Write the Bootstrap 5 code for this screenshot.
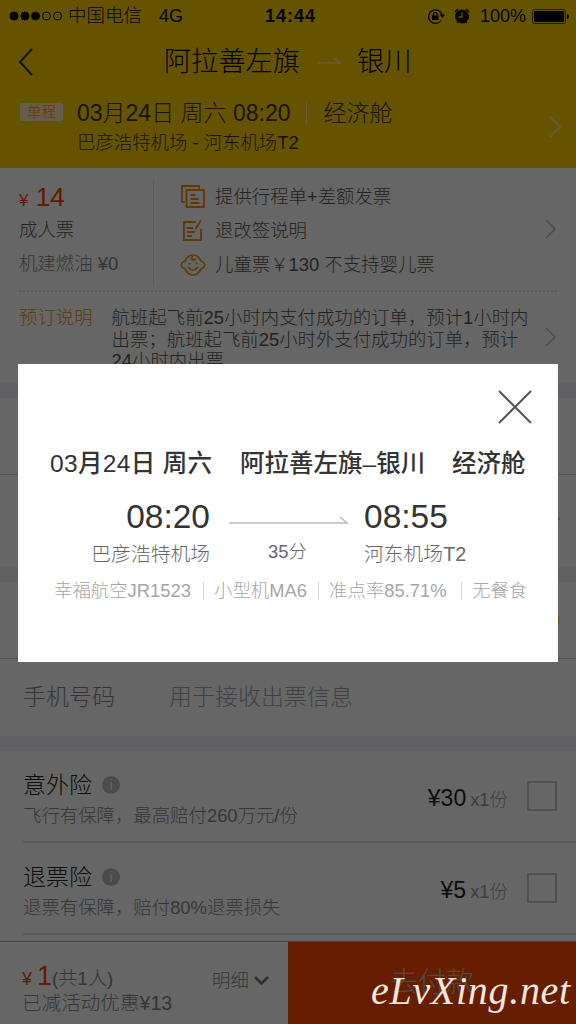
<!DOCTYPE html>
<html lang="zh-CN">
<head>
<meta charset="utf-8">
<meta name="viewport" content="width=device-width, initial-scale=1">
<title>航班订单</title>
<link href="https://cdn.jsdelivr.net/npm/bootstrap@5.3.0/dist/css/bootstrap.min.css" rel="stylesheet">
<style>
html,body{height:100%}
body{font-family:"Liberation Sans","Noto Sans CJK SC",sans-serif;font-size:18.4px;font-weight:300;line-height:1;color:#555;background:#fff;overflow:hidden;white-space:nowrap}
svg{display:block;flex:none;fill:none}
.phone{width:576px;height:1024px;position:relative;overflow:hidden}
.top-area{background:#ffcf00;height:168px;color:#111}
.status-row{height:32px;padding-left:9px;color:#080808;font-size:18px}
.carrier{font-size:18.5px;margin-left:5px}
.net-type{margin-left:17px}
.clock{margin-left:82px;font-weight:700;letter-spacing:1px;width:162px}
.pct{margin-left:10px;width:51px}
.nav-row{height:60px;padding-left:18px;font-size:27.2px;color:#000}
.nav-row .from{margin-left:130px;width:153px}
.nav-row .to{margin-left:16px}
.trip-row{padding:7px 14px 0 20px}
.trip-tag{width:43px;height:18px;border-radius:2px;background:#ffe9b8;color:#f80;font-size:14.5px;line-height:18px;text-align:center;margin:4px 14px 0 0}
.trip-date{font-size:23px;height:28px;line-height:28px;color:#3d3300}
.trip-date i{width:1px;height:23px;background:#ffec9c;margin:0 17px 0 15px}
.trip-port{height:30px;line-height:32px;color:#3d3300}
.fare{height:124px;margin:0 19px;border-bottom:2px dotted #e4e4e4;padding-top:11px}
.fare-left{width:135px;height:107px;border-right:1px solid #e6e6e6}
.fare-left>div,.fare-right>div{height:34px;line-height:34px}
.fare-left .price{color:#ff3a00;font-size:26px;margin-top:3px;height:31px;line-height:31px}
.price small,.total small{font-size:17px}
.pale{color:#888}
.fare-right{margin-left:26px;width:350px}
.fare-right svg{margin-right:9px}
.fare-right>div:first-child{height:35px}
.notice{height:91px;padding:15px 19px 0}
.orange{color:#f28a10}
.notice p{width:438px;margin:0 0 0 19px;line-height:21.7px}
.notice p,.notice .orange{line-height:21.7px}
.band{height:15px;background:#f0f0f5}
.blank-a{height:77px;border-bottom:1px solid #ccc}
.blank-b{height:92px}
.blank-c{height:77px;border-bottom:1px solid #ccc}
.phone-field{height:77px;padding-left:23px;font-size:23px;color:#858585}
.phone-field span+span{margin-left:54px;color:#a3a3ac}
.insure{height:92px;margin-left:23px;padding-right:19px;border-bottom:2px solid #dedede}
.insure h2{font-size:23px;line-height:32px;font-weight:300;color:#222;margin:18px 0 0}
.insure p{line-height:30px;margin:0;color:#888}
.info-dot{width:18px;height:18px;border-radius:50%;background:#bbb;color:#fff;font-size:14px;line-height:18px;text-align:center;margin-left:10px}
.cost{font-size:23px;color:#222;margin-top:4px}
.cost span{font-size:18.4px;color:#999;margin-left:4px}
.tick{width:30px;height:30px;border:2px solid #c5c5c5;margin-left:19px}
.pay-bar{position:absolute;left:0;right:0;bottom:0;height:83px;background:#fff;border-top:1px solid #aaa}
.sum{width:288px;padding:18px 0 0 22px;color:#858585}
.total{height:32px;line-height:32px;font-size:19px;width:190px}
.total b{font-weight:400;font-size:27px;color:#ff4200}
.total small{color:#ff4200;font-size:18px;margin-right:5px}
.saved{font-size:19.6px;line-height:22px}
.pay-btn{width:288px;background:#ff4a00;border:0;border-radius:0;color:#bbb;font-size:28px;font-weight:300;padding:0;line-height:1}
.shade{position:absolute;inset:0;background:rgba(0,0,0,.6)}
.dialog-box{position:absolute;left:18px;top:364px;width:540px;height:298px;background:#fff;color:#333}
.close-x{height:82px;padding:26px 26px 0 0}
.dlg-title{height:36px;padding-left:32px;font-size:24.5px;font-weight:500}
.dlg-title .d1{width:190px;letter-spacing:.35px}
.dlg-title .d2{width:212px}
.times{height:70px;margin-top:11px;display:grid;grid-template-columns:194px 152px 194px}
.times .clk{font-size:33.5px;line-height:48px;height:47px}
.times .port{font-size:19.8px;line-height:29px;color:#666}
.times>div:nth-child(2){padding-left:17px}
.times>div:nth-child(2) svg{margin-top:19px}
.dur{margin-top:15px;line-height:26px;padding-left:39px;color:#666}
.extras{height:34px;padding-left:36px;color:#a5a5a5;margin-top:11px}
.extras span{border-left:1px solid #d4d4d4;line-height:18px}
.extras span:first-child{border:0}
.wm{position:absolute;left:371px;top:970px;font:italic 40px/42px "Liberation Serif",serif;color:#f1e5df;letter-spacing:.7px}
</style>
</head>
<body>
<main class="phone">
  <header class="top-area">
    <div class="status-row d-flex align-items-center">
      <svg width="54" height="12"><g stroke="#080808" fill="#080808"><circle cx="5" cy="6" r="4"/><circle cx="16" cy="6" r="4"/><circle cx="26.500" cy="6" r="4"/><circle cx="37.500" cy="6" r="4" fill="none"/><circle cx="48.500" cy="6" r="4" fill="none"/></g></svg>
      <span class="carrier">中国电信</span><span class="net-type">4G</span><span class="clock">14:44</span>
      <svg width="18" height="17" stroke="#080808" stroke-width="1.300"><path d="M14 12.500A6.800 6.800 0 1 1 15 7"/><path d="M12.500 6.500H18L15.500 10Z" fill="#080808" stroke="none"/><rect x="5" y="7.500" width="6.500" height="4.500" fill="#080808" stroke="none"/><path d="M6.500 8V6q0-1.700 1.700-1.700T10 6v2"/></svg>
      <svg width="16" height="17" style="margin-left:9px" stroke="#080808"><circle cx="8" cy="8.500" r="6.500" fill="#080808"/><path d="M1 4l3-3M12 1l3 3M3 15l2-2M13 15l-2-2" stroke-width="1.500"/><path d="M8 4.500V9H4.500" stroke="#ffcf00" stroke-width="1.300"/></svg>
      <span class="pct">100%</span>
      <svg width="38" height="15" style="margin-left:1px"><rect x=".5" y=".5" width="33" height="14" rx="2" stroke="#444"/><rect x="2" y="2" width="30" height="11" rx="1" fill="#000"/><path d="M35 5q2 0 2 2.500T35 10Z" fill="#000"/></svg>
    </div>
    <div class="nav-row d-flex align-items-center">
      <svg width="16" height="30" stroke="#332a00" stroke-width="2"><path d="M14 2L2 15L14 28"/></svg>
      <span class="from">阿拉善左旗</span>
      <svg width="24" height="10" stroke="#ffe999" stroke-width="1.500"><path d="M0 6H23L17 1"/></svg>
      <span class="to">银川</span>
    </div>
    <div class="trip-row d-flex">
      <div class="trip-tag">单程</div>
      <div class="flex-grow-1">
        <div class="trip-date d-flex align-items-center">03月24日 周六 08:20<i></i>经济舱</div>
        <div class="trip-port">巴彦浩特机场 - 河东机场T2</div>
      </div>
      <svg width="14" height="22" style="margin-top:17px" stroke="#f5e6aa" stroke-width="2"><path d="M2 1L12 11L2 21"/></svg>
    </div>
  </header>

  <section class="fare d-flex">
    <div class="fare-left"><div class="price"><small>¥</small> 14</div><div>成人票</div><div class="pale">机建燃油 ¥0</div></div>
    <div class="fare-right">
      <div class="d-flex align-items-center"><svg width="26" height="24" stroke="#f28a10" stroke-width="1.800"><path d="M5 17H2V1H19V5M6.500 5H24V22H6.500Z"/><path d="M10.500 10h5M10.500 14h8M10.500 18h9"/></svg>提供行程单+差额发票</div>
      <div class="d-flex align-items-center"><svg width="26" height="24" stroke="#f28a10" stroke-width="1.800"><path d="M16 3H4V21H21V10M21 1L15.500 10"/><path d="M7 9h6M7 13h8M7 17h5"/></svg>退改签说明</div>
      <div class="d-flex align-items-center"><svg width="26" height="24" stroke="#f28a10" stroke-width="1.700"><path d="M1 12Q2 9 5 8Q8 2 13 2T21 8Q24 9 25 12Q24 15 21 16Q18 22 13 22T5 16Q2 15 1 12Z"/><path d="M8 14q5 6 10 0M8.500 10.500h2M15.500 10.500h2M13 3q-3 3 0 4q2 0 2-2"/></svg>儿童票￥130 不支持婴儿票</div>
    </div>
    <svg class="ms-auto" width="12" height="20" style="margin-top:40px" stroke="#bbb" stroke-width="1.600"><path d="M1 1L10 10L1 19"/></svg>
  </section>
  <section class="notice d-flex">
    <span class="orange">预订说明</span>
    <p>航班起飞前25小时内支付成功的订单，预计1小时内<br>出票；航班起飞前25小时外支付成功的订单，预计<br>24小时内出票</p>
    <svg class="ms-auto" width="12" height="20" style="margin-top:20px" stroke="#bbb" stroke-width="1.600"><path d="M1 1L10 10L1 19"/></svg>
  </section>
  <div class="band"></div>
  <div class="blank-a"></div>
  <div class="blank-b d-flex align-items-center justify-content-end"><svg width="19" height="90" style="overflow:visible"><path d="M-5 36l7 7l-7 7" stroke="#bbb" stroke-width="1.500"/></svg></div>
  <div class="band"></div>
  <div class="blank-c d-flex align-items-center"><svg width="24" height="24" style="margin-left:535px"><circle cx="12" cy="12" r="12" fill="#ffad00"/></svg></div>
  <div class="phone-field d-flex align-items-center"><span>手机号码</span><span>用于接收出票信息</span></div>
  <div class="band"></div>
  <section class="insure d-flex">
    <div class="flex-grow-1"><h2 class="d-flex align-items-center">意外险<span class="info-dot">i</span></h2><p>飞行有保障，最高赔付260万元/份</p></div>
    <div class="d-flex align-items-center"><div class="cost">¥30<span>x1份</span></div><div class="tick"></div></div>
  </section>
  <section class="insure d-flex">
    <div class="flex-grow-1"><h2 class="d-flex align-items-center">退票险<span class="info-dot">i</span></h2><p>退票有保障，赔付80%退票损失</p></div>
    <div class="d-flex align-items-center"><div class="cost">¥5<span>x1份</span></div><div class="tick"></div></div>
  </section>
  <footer class="pay-bar d-flex">
    <div class="sum d-flex">
      <div><div class="total"><small>¥</small><b>1</b>(共1人)</div><div class="saved">已减活动优惠¥13</div></div>
      <div class="d-flex align-items-center" style="height:42px"><span>明细</span><svg class="ms-1" width="16" height="12" stroke="#777" stroke-width="2.500"><path d="M2 2L8.500 8.500L15 2"/></svg></div>
    </div>
    <button class="pay-btn btn">去付款</button>
  </footer>

  <div class="shade"></div>
  <section class="dialog-box" role="dialog">
    <div class="close-x d-flex justify-content-end"><svg width="34" height="34" stroke="#555" stroke-width="2"><path d="M1 1L33 33M33 1L1 33"/></svg></div>
    <div class="dlg-title d-flex align-items-center"><span class="d1">03月24日 周六</span><span class="d2">阿拉善左旗–银川</span><span>经济舱</span></div>
    <div class="times">
      <div class="text-end" style="padding-right:2px"><div class="clk">08:20</div><div class="port">巴彦浩特机场</div></div>
      <div><svg width="120" height="12" stroke="#bbb" stroke-width="1.500"><path d="M0 11H118L111 5"/></svg><div class="dur">35分</div></div>
      <div><div class="clk">08:55</div><div class="port">河东机场T2</div></div>
    </div>
    <div class="extras d-flex align-items-center"><span style="width:149px">幸福航空JR1523</span><span style="width:115px;padding-left:10px">小型机MA6</span><span style="width:143px;padding-left:10px">准点率85.71%</span><span style="padding-left:10px">无餐食</span></div>
  </section>
  <div class="wm">eLvXing.net</div>
</main>
<script src="https://cdn.jsdelivr.net/npm/bootstrap@5.3.0/dist/js/bootstrap.bundle.min.js"></script>
</body>
</html>
